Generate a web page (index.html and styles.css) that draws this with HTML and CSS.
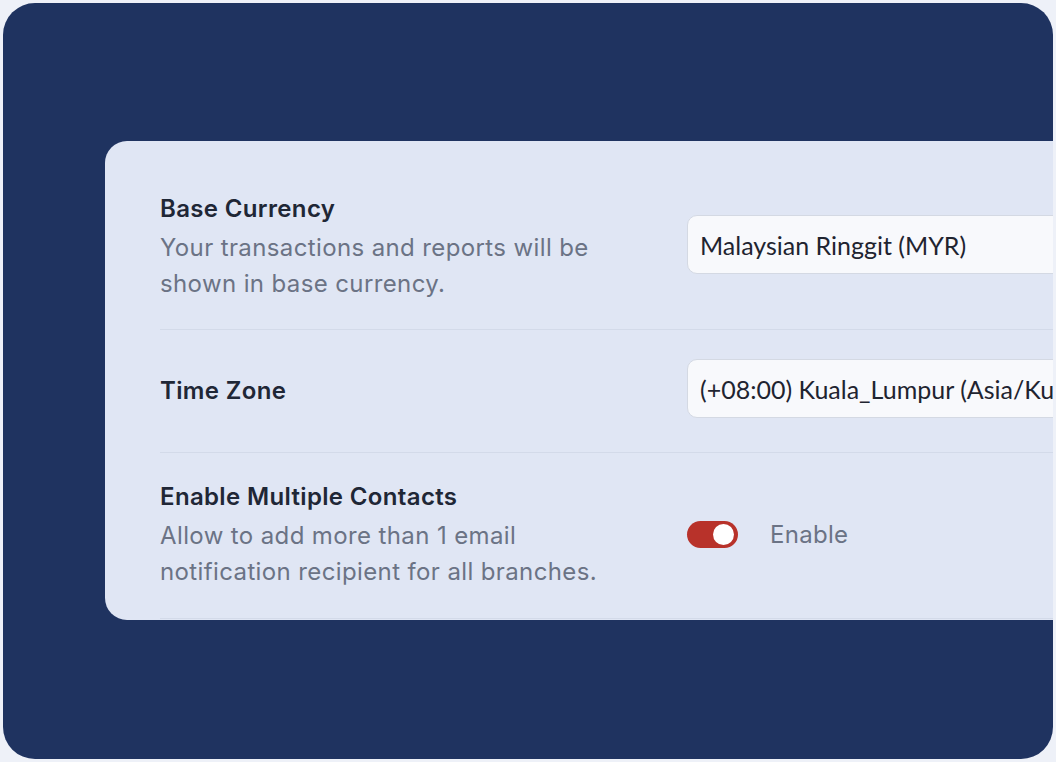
FILE: index.html
```html
<!DOCTYPE html>
<html lang="en">
<head>
<meta charset="utf-8">
<title>Settings</title>
<link rel="stylesheet" href="styles.css">
</head>
<body>
<div class="frame">
  <div class="card">
    <div class="row row-first">
      <div class="info">
        <div class="title">Base Currency</div>
        <div class="desc">Your transactions and reports will be shown in base currency.</div>
      </div>
      <div class="control">
        <div class="select">Malaysian Ringgit (MYR)</div>
      </div>
    </div>
    <div class="row row-mid">
      <div class="info">
        <div class="title title-single">Time Zone</div>
      </div>
      <div class="control">
        <div class="select">(+08:00) Kuala_Lumpur (Asia/Kuala_Lumpur)</div>
      </div>
    </div>
    <div class="row row-last">
      <div class="info">
        <div class="title">Enable Multiple Contacts</div>
        <div class="desc">Allow to add more than 1 email notification recipient for all branches.</div>
      </div>
      <div class="control control-toggle">
        <span class="toggle"><span class="knob"></span></span>
        <span class="toggle-label">Enable</span>
      </div>
    </div>
  </div>
</div>
</body>
</html>
```
FILE: styles.css
```css
* { box-sizing: border-box; }
html, body { margin: 0; padding: 0; }
body {
  background: #eef1f8;
  width: 1056px;
  height: 762px;
  overflow: hidden;
  font-family: Inter, "Liberation Sans", sans-serif;
}
.frame {
  margin: 3px;
  width: 1050px;
  height: 756px;
  border-radius: 32px;
  background: #1f3360;
  overflow: hidden;
  padding: 138px 0 0 102px;
}
.card {
  width: 1100px;
  background: #e0e6f4;
  border-radius: 22px;
  padding: 22px 0 1px 55px;
}
.row {
  display: grid;
  grid-template-columns: 527px 1fr;
  border-bottom: 1px solid #d3dae9;
}
.row-first { padding: 28px 0 27px; }
.row-mid { padding: 29px 0 34px; }
.row-last { padding: 26px 0 28px; }
.title {
  font-size: 24px;
  line-height: 36px;
  font-weight: 600;
  color: #1f2736;
  letter-spacing: 0.35px;
}
.title-single { margin-top: 14px; }
.desc {
  margin-top: 3px;
  width: 460px;
  font-size: 24px;
  line-height: 36px;
  color: #6b7385;
  letter-spacing: 0.38px;
}
.control { padding-top: 24px; }
.row-mid .control { padding-top: 0; }
.select {
  height: 59px;
  border: 1px solid #d4d9e3;
  border-radius: 10px;
  background: #f8f9fc;
  padding: 0 12px;
  display: flex;
  align-items: center;
  font-family: Lato, "Open Sans", sans-serif;
  font-size: 25px;
  color: #1f2430;
  white-space: nowrap;
  overflow: hidden;
}
.control-toggle {
  display: flex;
  align-items: center;
  gap: 32px;
  padding-top: 0;
  height: 110px;
}
.toggle {
  width: 51px;
  height: 27px;
  border-radius: 14px;
  background: #b8322a;
  display: flex;
  align-items: center;
  justify-content: flex-end;
  padding-right: 4px;
}
.knob {
  width: 21px;
  height: 21px;
  border-radius: 50%;
  background: #ffffff;
}
.toggle-label {
  font-size: 24px;
  color: #6b7385;
  letter-spacing: 0.3px;
}
```
